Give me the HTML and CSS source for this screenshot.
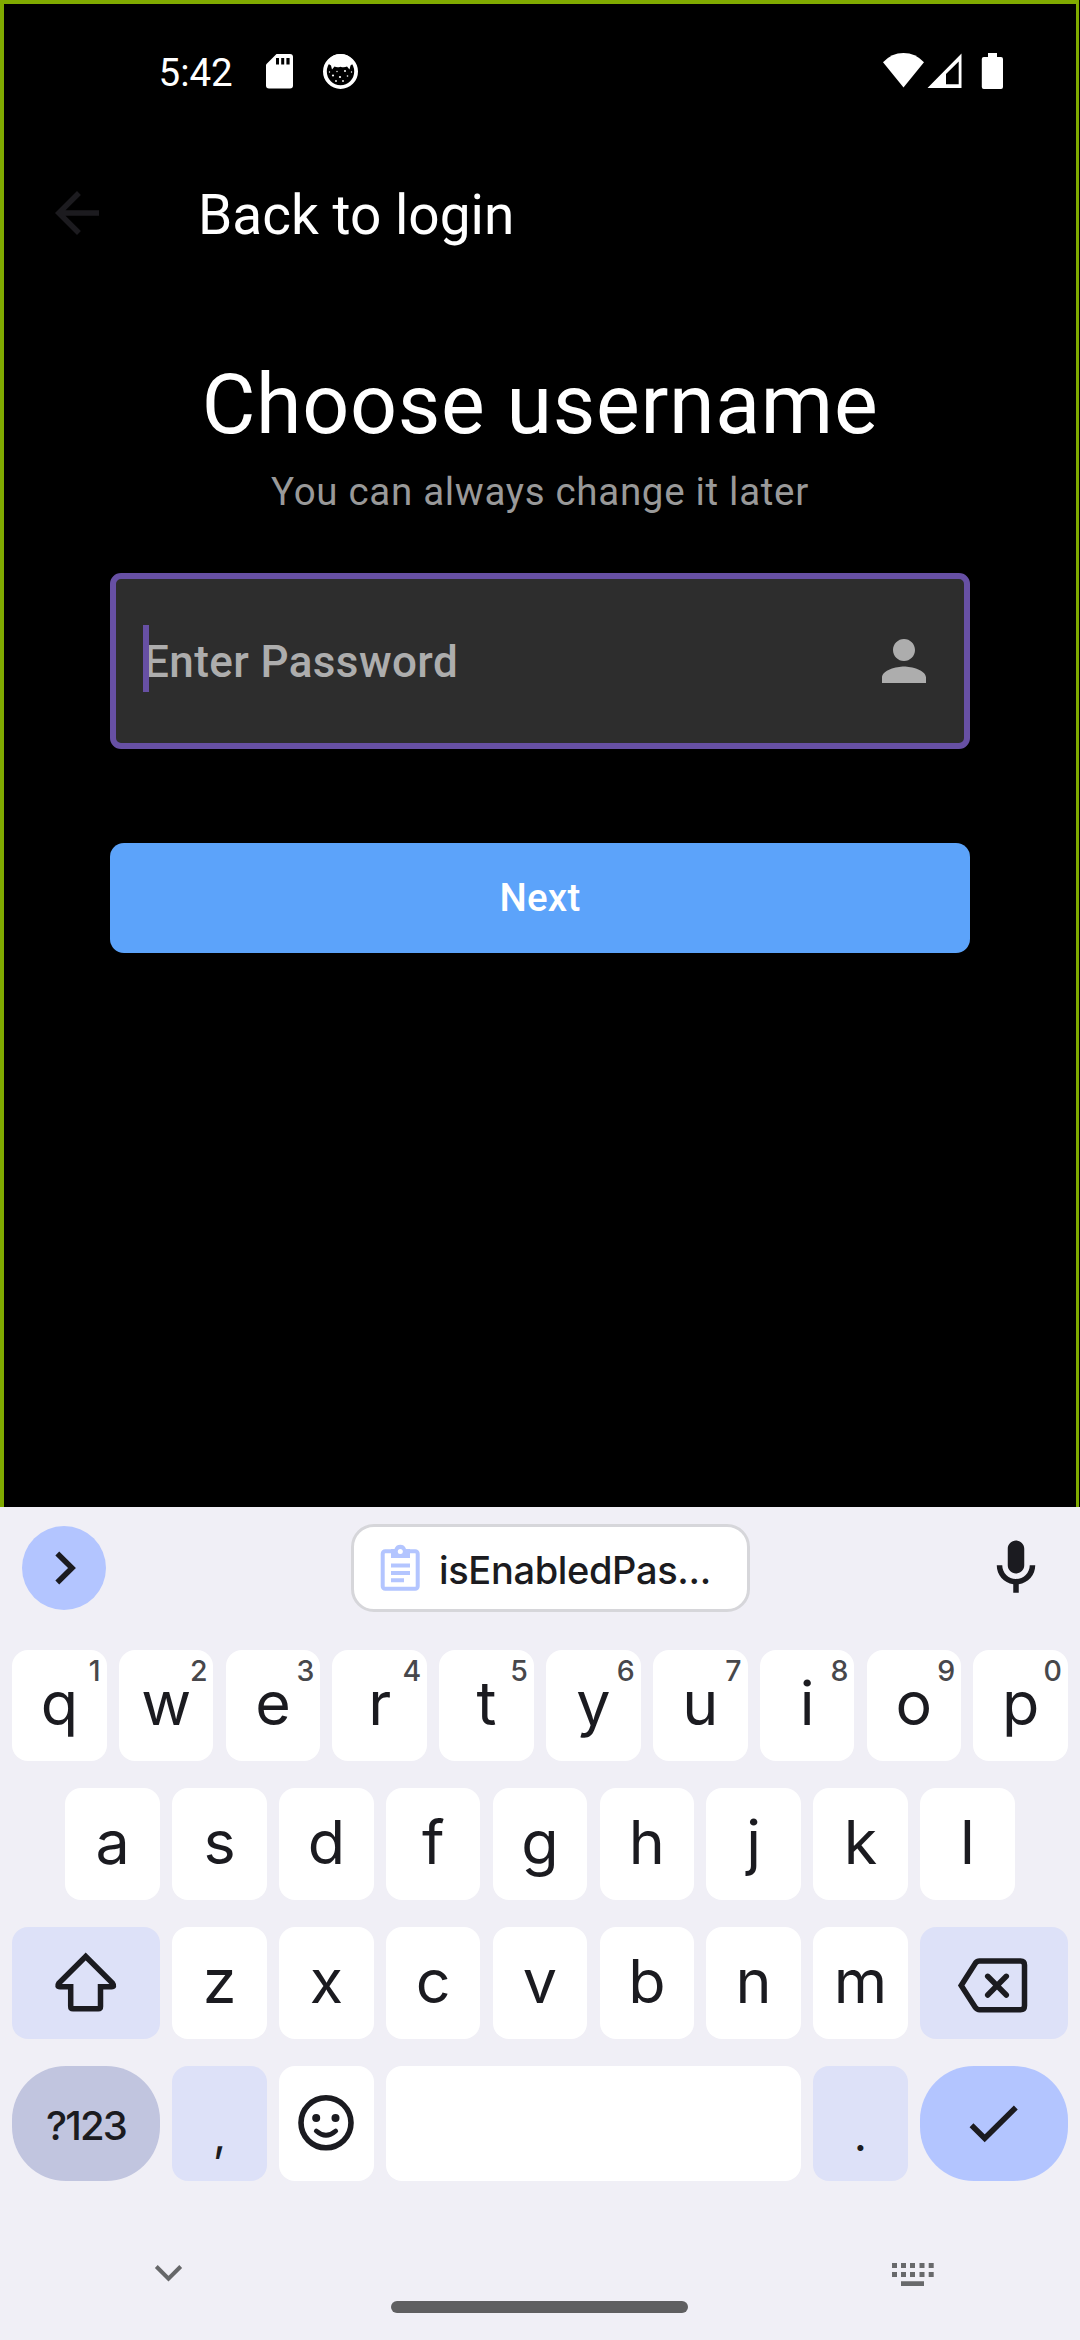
FILE: index.html
```html
<!DOCTYPE html>
<html lang="en">
<head>
<meta charset="utf-8">
<title>Choose username</title>
<link rel="stylesheet" href="styles.css">
</head>
<body>
<main class="app">
  <div class="status">
    <span class="clock">5:42</span>
    <svg width="100" height="46" viewBox="262 50 100 46">
      <path fill="#fff" d="M276.500 54H290a3 3 0 0 1 3 3V85.500a3 3 0 0 1-3 3H269a3 3 0 0 1-3-3V64.500z"/>
      <path fill="#000" d="M276 58h3v6.500h-3zM281.200 58h3v6.500h-3zM286.400 58h3.200v6.500h-3.200z"/>
      <circle cx="340.500" cy="71.500" r="15.600" fill="#000" stroke="#fff" stroke-width="3.800"/>
      <path fill="#fff" d="M327 62Q332 54 340.500 54T354 62Q352 65 350.500 65.500L349.500 69.500 347 66.500Q344 68 340.500 66.800 337 68 334.500 66.500L332 69.500 331 65.500Q329 65 327 62z"/>
      <g fill="#fff"><circle cx="333" cy="75.500" r="1.100"/><circle cx="340" cy="77" r="1.100"/><circle cx="345" cy="71" r="1"/><circle cx="336" cy="81" r=".9"/><circle cx="343" cy="81" r=".9"/><circle cx="347.500" cy="76" r=".8"/><circle cx="329.500" cy="72" r=".7"/><circle cx="337" cy="71.500" r=".7"/><circle cx="351.500" cy="72" r=".7"/></g>
    </svg>
    <svg class="system" width="130" height="46" viewBox="880 50 130 46">
      <path fill="#fff" d="M883 62.300Q891.500 53 903.500 53T924 62.300L903.500 87.500z"/>
      <path fill="#fff" fill-rule="evenodd" d="M961.500 53.500V88H927.500zM958.700 61.500 946 74V84.300H958.700z"/>
      <path fill="#fff" d="M988 53h9v4h4a2 2 0 0 1 2 2v28a2 2 0 0 1-2 2h-17.200a2 2 0 0 1-2-2V59a2 2 0 0 1 2-2h4.200z"/>
    </svg>
  </div>
  <header class="appbar">
    <svg width="66" height="66" viewBox="0 0 24 24"><path fill="#1c1b1f" d="M20 11H7.830l5.590-5.590L12 4l-8 8 8 8 1.410-1.410L7.830 13H20z"/></svg>
    <span class="appbar-title">Back to login</span>
  </header>
  <h1 class="title">Choose username</h1>
  <p class="subtitle">You can always change it later</p>
  <div class="field">
    <span class="caret"></span>
    <span class="placeholder">Enter Password</span>
    <svg width="66" height="66" viewBox="0 0 24 24"><path fill="#adadad" d="M12 12c2.210 0 4-1.790 4-4s-1.790-4-4-4-4 1.790-4 4 1.790 4 4 4zm0 2c-2.670 0-8 1.340-8 4v2h16v-2c0-2.660-5.330-4-8-4z"/></svg>
  </div>
  <button class="next">Next</button>
</main>
<section class="keyboard">
  <div class="toolbar">
    <div class="expand"><svg width="84" height="84" viewBox="22 1525 84 84"><path fill="none" stroke="#1b1b20" stroke-width="5.500" d="M57.300 1552.500 72 1567 57.300 1581.500"/></svg></div>
    <div class="chip">
      <svg width="40" height="48" viewBox="380 1544 40 48">
        <rect x="382.700" y="1551.300" width="35" height="37.500" rx="2.500" fill="none" stroke="#b3c5ff" stroke-width="4"/>
        <path fill="#b3c5ff" d="M391 1549h3.500a6 6 0 0 1 11.500 0h4v9h-19z"/><circle cx="400.300" cy="1551.500" r="2.500" fill="#fff"/>
        <path fill="#b3c5ff" d="M391 1563.500h19v4h-19zM391 1571h19v4h-19zM391 1578.300h13v4h-13z"/>
      </svg>
      <span class="clip">isEnabledPas...</span>
    </div>
    <svg class="mic" width="66" height="66" viewBox="0 0 24 24"><path fill="#1b1b20" d="M12 14c1.660 0 3-1.340 3-3V5c0-1.660-1.340-3-3-3S9 3.340 9 5v6c0 1.660 1.340 3 3 3zm5-3c0 2.760-2.240 5-5 5s-5-2.240-5-5H5c0 3.530 2.610 6.430 6 6.920V21h2v-3.080c3.390-.49 6-3.390 6-6.920z"/></svg>
  </div>
  <div class="keys">
    <div class="key">q<span class="hint">1</span></div>
    <div class="key">w<span class="hint">2</span></div>
    <div class="key">e<span class="hint">3</span></div>
    <div class="key">r<span class="hint">4</span></div>
    <div class="key">t<span class="hint">5</span></div>
    <div class="key">y<span class="hint">6</span></div>
    <div class="key">u<span class="hint">7</span></div>
    <div class="key">i<span class="hint">8</span></div>
    <div class="key">o<span class="hint">9</span></div>
    <div class="key">p<span class="hint">0</span></div>
    <div class="key indent">a</div>
    <div class="key">s</div>
    <div class="key">d</div>
    <div class="key">f</div>
    <div class="key">g</div>
    <div class="key">h</div>
    <div class="key">j</div>
    <div class="key">k</div>
    <div class="key">l</div>
    <div class="key mod shift"><svg width="148" height="112" viewBox="12 1927 148 112"><path fill="none" stroke="#1b1b20" stroke-width="5.500" d="M85.700 1956.500 58.800 1983.300Q56.500 1986.700 60 1986.700H70.700V2006.500Q70.700 2008.700 73 2008.700H98.300Q100.500 2008.700 100.500 2006.500V1986.700H111.500Q115 1986.700 112.600 1983.300z"/></svg></div>
    <div class="key">z</div>
    <div class="key">x</div>
    <div class="key">c</div>
    <div class="key">v</div>
    <div class="key">b</div>
    <div class="key">n</div>
    <div class="key">m</div>
    <div class="key wide mod"><svg width="149" height="112" viewBox="919 1927 149 112"><g fill="none" stroke="#1b1b20" stroke-width="5.500"><path d="M961.200 1985.500 975.500 1963Q977 1961 979.500 1961H1020.500Q1024.500 1961 1024.500 1965V2005.700Q1024.500 2009.700 1020.500 2009.700H979.500Q977 2009.700 975.500 2007.700z"/><path stroke-linecap="round" d="M987.700 1976.300 1006.300 1995M1006.300 1976.300 987.700 1995"/></g></svg></div>
    <div class="key wide symbols">?123</div>
    <div class="key mod punct">,</div>
    <div class="key"><svg width="94" height="115" viewBox="278 2066 94 115"><g fill="none" stroke="#1b1b20"><circle cx="325" cy="2122.800" r="25" stroke-width="5.600"/><path stroke-width="4.800" stroke-linecap="round" d="M315.300 2131Q325 2139.500 334.700 2131"/></g><circle cx="315.200" cy="2118" r="4" fill="#1b1b20"/><circle cx="334.500" cy="2118" r="4" fill="#1b1b20"/></svg></div>
    <div class="key space"></div>
    <div class="key mod punct">.</div>
    <div class="key wide enter"><svg width="149" height="115" viewBox="919 2066 149 115"><path fill="none" stroke="#1b1b20" stroke-width="5.500" d="M971.500 2125.300 984.700 2138.300 1015.800 2107.500"/></svg></div>
  </div>
  <div class="navbar">
    <svg width="30" height="20" viewBox="154 2264 30 20"><path fill="none" stroke="#666769" stroke-width="4" d="M156.300 2267.500 168.500 2279.700 180.700 2267.500"/></svg>
    <span class="pill"></span>
    <svg width="42" height="24" viewBox="892 2263 42 24"><path fill="#68696b" d="M892 2263h5v5h-5zM901 2263h5v5h-5zM910 2263h5v5h-5zM919.500 2263h5v5h-5zM928.700 2263h5v5h-5zM892 2272h5v5h-5zM901 2272h5v5h-5zM910 2272h5v5h-5zM919.500 2272h5v5h-5zM928.700 2272h5v5h-5zM901 2281.300h23v4.700h-23z"/></svg>
  </div>
</section>
</body>
</html>
```
FILE: styles.css
```css
* { box-sizing: border-box; }
body {
  margin: 0;
  width: 1080px;
  height: 2340px;
  background: #000;
  overflow: hidden;
  font-family: Roboto, sans-serif;
}
svg { display: block; flex: none; }

.app {
  display: flex;
  flex-direction: column;
  width: 1079px;
  height: 1507px;
  border: 4px solid #80aa00;
  border-right-width: 3px;
  border-bottom: 0;
  color: #fff;
}
.status {
  display: flex;
  align-items: center;
  height: 138px;
  padding: 0 66px 0 154.5px;
}
.clock { width: 103.5px; font-size: 38.5px; line-height: 46px; white-space: nowrap; }
.system { margin-left: auto; }
.appbar {
  display: flex;
  align-items: center;
  gap: 88px;
  height: 142px;
  padding-left: 40px;
}
.appbar-title { padding-top: 4px; font-size: 55px; line-height: 66px; }
.title {
  margin: 73px 0 0;
  text-align: center;
  font-size: 82.5px;
  font-weight: 400;
  line-height: 96px;
  letter-spacing: .69px;
}
.subtitle {
  margin: 13px 0 0;
  text-align: center;
  font-size: 38.5px;
  line-height: 52px;
  letter-spacing: .69px;
  color: #999;
}
.field {
  display: flex;
  align-items: center;
  width: 860px;
  height: 176px;
  margin: 55px 0 0 106px;
  padding: 0 27px;
  border: 6px solid #6750a4;
  border-radius: 11px;
  background: #2d2d2d;
}
.caret { width: 6px; height: 67px; margin: 0 -5px 5px 0; background: #6750a4; z-index: 1; }
.placeholder {
  flex: 1;
  padding-top: 1px;
  font-size: 44px;
  font-weight: 500;
  line-height: 60px;
  letter-spacing: .4px;
  color: #adadad;
}
.next {
  width: 860px;
  height: 110px;
  margin: 94px 0 0 106px;
  padding: 0;
  border: 0;
  border-radius: 14px;
  background: #5ca3fa;
  color: #fff;
  font: 500 38.5px/110px Roboto, sans-serif;
  letter-spacing: .275px;
}

.keyboard {
  height: 833px;
  background: #f0eff6;
  color: #1b1b20;
  font-family: Inter, sans-serif;
}
.toolbar {
  display: flex;
  align-items: center;
  height: 121px;
  padding: 0 31px 0 22px;
}
.expand { width: 84px; height: 84px; border-radius: 42px; background: #b3c5ff; }
.chip {
  display: flex;
  align-items: center;
  gap: 19px;
  width: 399px;
  height: 88px;
  margin-left: 245px;
  padding-left: 26px;
  border: 3px solid #d6d6da;
  border-radius: 23px;
  background: #fff;
}
.clip { padding-top: 4px; font-size: 38px; font-weight: 500; letter-spacing: -.35px; }
.mic { margin-left: auto; }
.keys {
  display: grid;
  grid-template-columns: repeat(20, 1fr);
  grid-template-rows: 111px 112px 112px 115px;
  gap: 27px 12.2px;
  padding: 22px 12px 0;
}
.key {
  position: relative;
  display: flex;
  align-items: center;
  justify-content: center;
  grid-column: span 2;
  padding-bottom: 5px;
  border-radius: 16px;
  background: #fff;
  font-size: 61px;
}
.key svg { margin-bottom: -5px; }
.indent { grid-column: 2 / span 2; }
.shift { grid-column: 1 / span 3; }
.wide { grid-column: span 3; }
.space { grid-column: span 8; }
.mod { background: #dde1f8; }
.symbols {
  padding: 4px 0 0;
  border-radius: 54px;
  background: #c1c5df;
  font-size: 40px;
  font-weight: 500;
  letter-spacing: -1.8px;
}
.punct { padding: 20px 0 0; font-size: 46px; }
.enter { border-radius: 54px; background: #b3c5ff; }
.hint {
  position: absolute;
  top: 6px;
  right: 6px;
  font-size: 28.5px;
  font-weight: 500;
  line-height: 30px;
  color: #47474b;
}
.navbar {
  display: flex;
  align-items: flex-start;
  justify-content: space-between;
  padding: 82px 146px 0 154px;
}
.pill {
  width: 297px;
  height: 12px;
  margin: 38px 0 0 3px;
  border-radius: 6px;
  background: #5f5f61;
}
```
